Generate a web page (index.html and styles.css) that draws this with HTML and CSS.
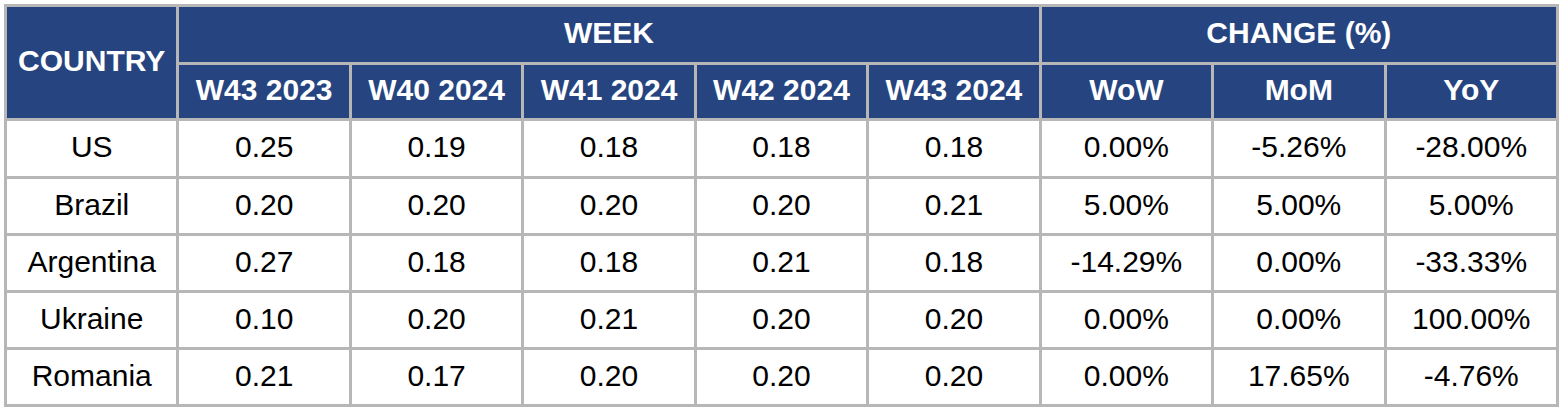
FILE: index.html
```html
<!DOCTYPE html>
<html>
<head>
<meta charset="utf-8">
<link rel="stylesheet" href="styles.css">
</head>
<body>
<table class="grid">
  <thead>
    <tr class="hrow1">
      <th rowspan="2" class="country">COUNTRY</th>
      <th colspan="5">WEEK</th>
      <th colspan="3">CHANGE (%)</th>
    </tr>
    <tr class="hrow2">
      <th>W43 2023</th>
      <th>W40 2024</th>
      <th>W41 2024</th>
      <th>W42 2024</th>
      <th>W43 2024</th>
      <th>WoW</th>
      <th>MoM</th>
      <th>YoY</th>
    </tr>
  </thead>
  <tbody>
    <tr class="brow first">
      <td>US</td><td>0.25</td><td>0.19</td><td>0.18</td><td>0.18</td><td>0.18</td><td>0.00%</td><td>-5.26%</td><td>-28.00%</td>
    </tr>
    <tr class="brow">
      <td>Brazil</td><td>0.20</td><td>0.20</td><td>0.20</td><td>0.20</td><td>0.21</td><td>5.00%</td><td>5.00%</td><td>5.00%</td>
    </tr>
    <tr class="brow">
      <td>Argentina</td><td>0.27</td><td>0.18</td><td>0.18</td><td>0.21</td><td>0.18</td><td>-14.29%</td><td>0.00%</td><td>-33.33%</td>
    </tr>
    <tr class="brow">
      <td>Ukraine</td><td>0.10</td><td>0.20</td><td>0.21</td><td>0.20</td><td>0.20</td><td>0.00%</td><td>0.00%</td><td>100.00%</td>
    </tr>
    <tr class="brow">
      <td>Romania</td><td>0.21</td><td>0.17</td><td>0.20</td><td>0.20</td><td>0.20</td><td>0.00%</td><td>17.65%</td><td>-4.76%</td>
    </tr>
  </tbody>
</table>
</body>
</html>
```
FILE: styles.css
```css
html, body {
  margin: 0;
  padding: 0;
  background: #ffffff;
}
body {
  padding: 4px;
  font-family: "Liberation Sans", Arial, sans-serif;
}
.grid {
  width: 1555px;
  table-layout: fixed;
  border-collapse: separate;
  border-spacing: 0;
  border-left: 3px solid #b7b7b7;
  border-top: 3px solid #b7b7b7;
}
.grid th,
.grid td {
  padding: 0 0 3px 0;
  border-right: 3px solid #b7b7b7;
  border-bottom: 3px solid #b7b7b7;
  text-align: center;
  vertical-align: middle;
  font-size: 30px;
  white-space: nowrap;
  overflow: hidden;
}
.grid th {
  background: #264580;
  color: #ffffff;
  font-weight: bold;
}
.grid td {
  color: #000000;
  font-weight: normal;
}
.hrow1 { height: 58px; }
.hrow2 { height: 56px; }
.brow { height: 57px; }
.brow.first { height: 58px; }
```
